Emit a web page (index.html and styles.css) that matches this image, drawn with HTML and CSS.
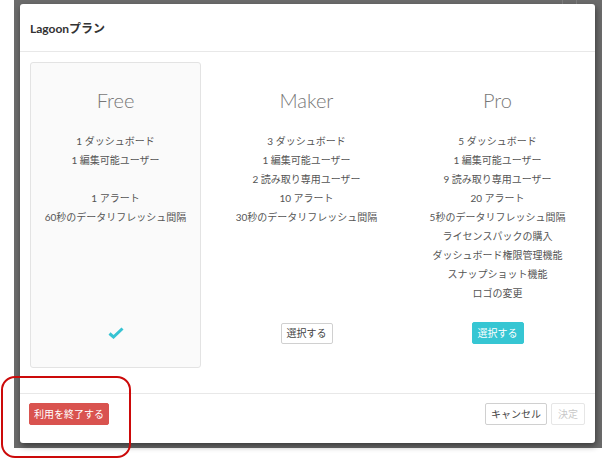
FILE: index.html
```html
<!DOCTYPE html>
<html lang="ja">
<head>
<meta charset="utf-8">
<link rel="stylesheet" href="styles.css">
</head>
<body>
<div class="page">
  <div class="backdrop">
    <div class="behind">
      <span class="behind-line behind-a"></span>
      <span class="behind-line behind-b"></span>
    </div>
    <div class="modal">
      <div class="modal-header">Lagoonプラン</div>
      <div class="modal-body">
        <div class="plan plan-current">
          <div class="plan-title">Free</div>
          <ul class="features">
            <li>1 ダッシュボード</li>
            <li>1 編集可能ユーザー</li>
            <li class="blank">&nbsp;</li>
            <li>1 アラート</li>
            <li>60秒のデータリフレッシュ間隔</li>
          </ul>
          <div class="plan-action">
            <svg class="check" width="16" height="12" viewBox="0 0 16 12"><polyline points="1.5,6.5 5.5,10 14.5,1.5" fill="none" stroke="#36c3d3" stroke-width="3" stroke-linejoin="miter"/></svg>
          </div>
        </div>
        <div class="plan">
          <div class="plan-title">Maker</div>
          <ul class="features">
            <li>3 ダッシュボード</li>
            <li>1 編集可能ユーザー</li>
            <li>2 読み取り専用ユーザー</li>
            <li>10 アラート</li>
            <li>30秒のデータリフレッシュ間隔</li>
          </ul>
          <div class="plan-action">
            <button class="btn btn-default">選択する</button>
          </div>
        </div>
        <div class="plan">
          <div class="plan-title">Pro</div>
          <ul class="features">
            <li>5 ダッシュボード</li>
            <li>1 編集可能ユーザー</li>
            <li>9 読み取り専用ユーザー</li>
            <li>20 アラート</li>
            <li>5秒のデータリフレッシュ間隔</li>
            <li>ライセンスパックの購入</li>
            <li>ダッシュボード権限管理機能</li>
            <li>スナップショット機能</li>
            <li>ロゴの変更</li>
          </ul>
          <div class="plan-action">
            <button class="btn btn-primary">選択する</button>
          </div>
        </div>
      </div>
      <div class="modal-footer">
        <button class="btn btn-danger">利用を終了する</button>
        <div class="footer-right">
          <button class="btn btn-default btn-cancel">キャンセル</button>
          <button class="btn btn-disabled">決定</button>
        </div>
      </div>
    </div>
  </div>
  <div class="annotation"></div>
</div>
</body>
</html>
```

FILE: styles.css
```css
* { box-sizing: border-box; }
html, body {
  margin: 0;
  padding: 0;
  background: #ffffff;
}
body {
  font-family: Lato, "Noto Sans CJK JP", sans-serif;
  color: #555;
  width: 602px;
  height: 460px;
  overflow: hidden;
}
.page {
  position: relative;
  width: 602px;
  height: 460px;
}
.backdrop {
  position: relative;
  margin-left: 14px;
  width: 588px;
  height: 448px;
  background: #6b6b6b;
  padding: 4px 0 0 6px;
}
.behind {
  position: absolute;
  top: 0;
  left: 0;
  right: 0;
  height: 4px;
  overflow: hidden;
}
.behind-line {
  position: absolute;
  top: 0;
  width: 1px;
  height: 4px;
  background: #7a7a7a;
}
.behind-a { left: 548px; }
.behind-b { left: 562px; }
.modal {
  width: 575px;
  height: 439px;
  background: #fff;
  border-radius: 3px;
  box-shadow: 1px 3px 6px rgba(0, 0, 0, 0.45);
  display: flex;
  flex-direction: column;
}
.modal-header {
  height: 48px;
  border-bottom: 1px solid #e8e8e8;
  padding-left: 10px;
  display: flex;
  align-items: center;
  font-size: 12px;
  font-weight: 700;
  color: #333;
}
.modal-body {
  padding: 10px 12px 25px 10px;
  display: grid;
  grid-template-columns: 1fr 1fr 1fr;
  column-gap: 20px;
}
.plan {
  height: 306px;
  border: 1px solid transparent;
  border-radius: 3px;
  display: flex;
  flex-direction: column;
  align-items: center;
  text-align: center;
  padding-bottom: 23px;
}
.plan-current {
  background: #fafafa;
  border-color: #e3e3e3;
}
.plan-title {
  margin-top: 25px;
  font-size: 20px;
  line-height: 24px;
  font-weight: 300;
  color: #777;
}
.features {
  list-style: none;
  margin: 20px 0 0;
  padding: 0;
  font-size: 10px;
  line-height: 19px;
  color: #555;
}
.plan-action {
  margin-top: auto;
  height: 22px;
  display: flex;
  align-items: center;
  justify-content: center;
}
.btn {
  font-family: Lato, "Noto Sans CJK JP", sans-serif;
  font-size: 10px;
  line-height: 1;
  height: 21px;
  padding: 0 5px;
  border-radius: 2px;
  border: 1px solid #d0d0d0;
  background: #fff;
  color: #444;
  cursor: pointer;
}
.btn-primary {
  background: #36c6d3;
  border-color: #36c6d3;
  color: #fff;
  height: 22px;
}
.btn-danger {
  background: #d9534f;
  border-color: #d9534f;
  color: #fff;
  height: 22px;
  padding: 0 4px;
}
.btn-disabled {
  color: #c8c8c8;
  border-color: #e6e6e6;
  height: 22px;
  padding: 0 6px;
}
.modal-footer {
  border-top: 1px solid #e8e8e8;
  padding: 9px 10px 0 9px;
  display: flex;
  justify-content: space-between;
  align-items: flex-start;
}
.btn-cancel {
  height: 22px;
  padding: 0 5px;
}
.footer-right {
  display: flex;
  gap: 4px;
}
.annotation {
  position: absolute;
  left: 1px;
  top: 376px;
  width: 130px;
  height: 82px;
  border: 2.5px solid #cc0a0a;
  border-radius: 14px;
}
```
